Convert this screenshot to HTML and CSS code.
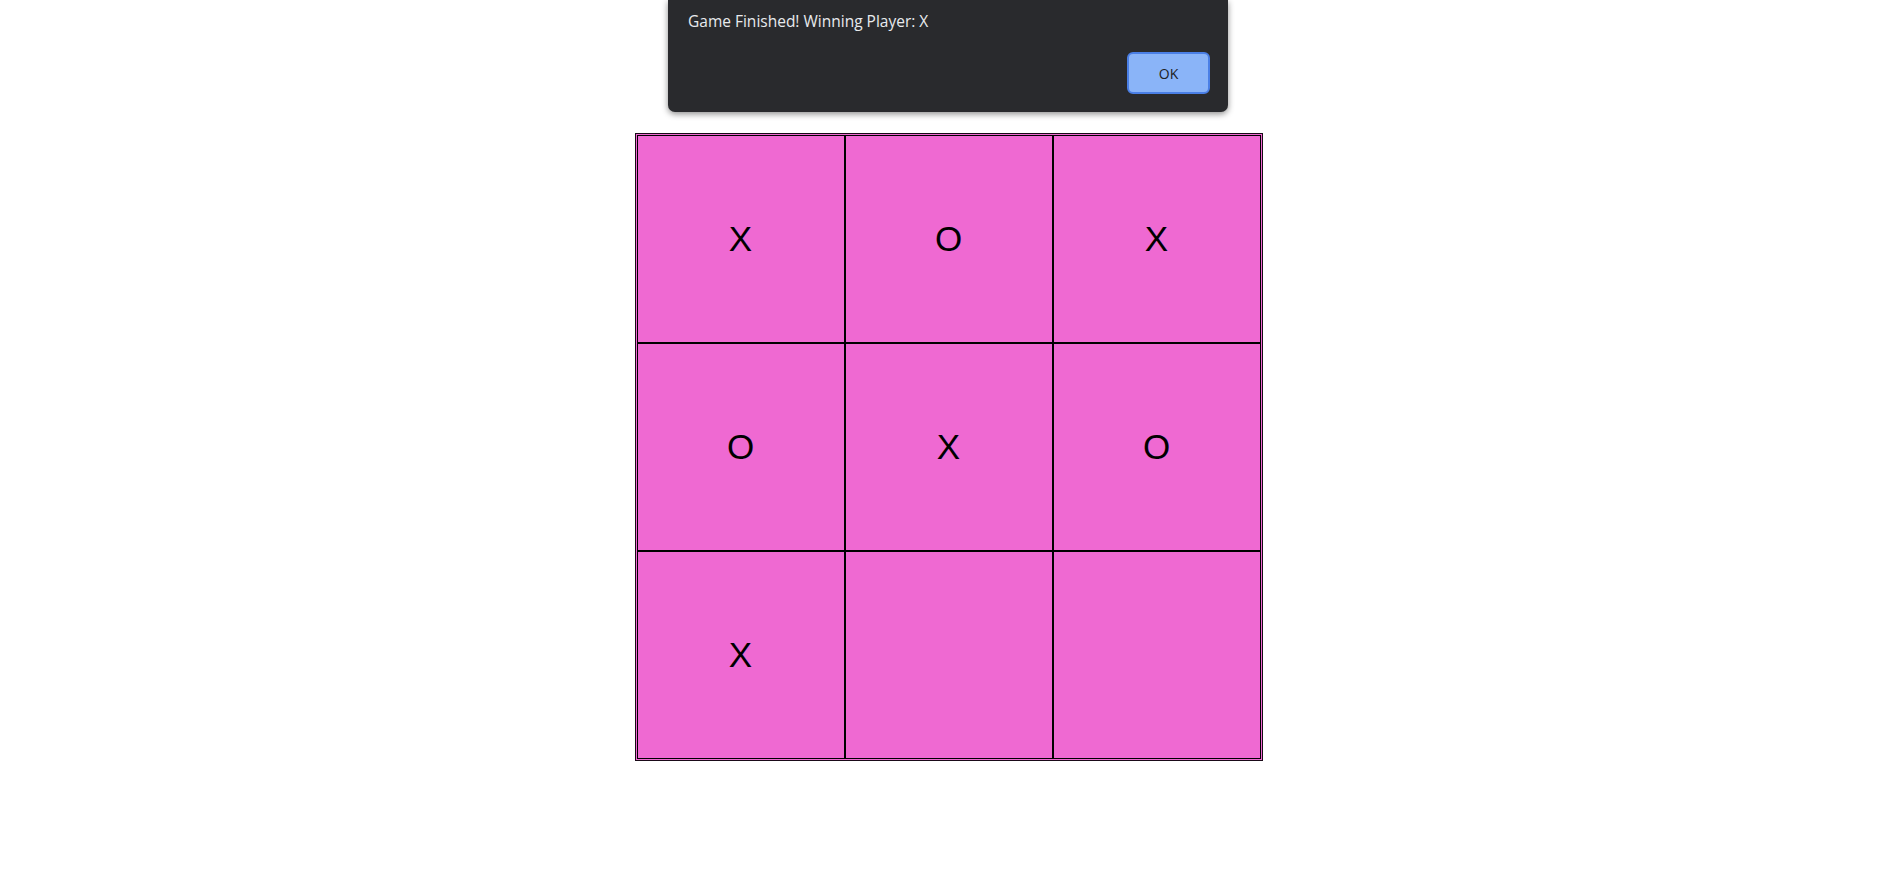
FILE: index.html
```html
<!DOCTYPE html>
<html>
<head>
<meta charset="utf-8">
<title>Tic Tac Toe</title>
<link rel="stylesheet" href="styles.css">
</head>
<body>
<div class="page">
  <div class="board">
    <div class="cell">X</div>
    <div class="cell">O</div>
    <div class="cell">X</div>
    <div class="cell">O</div>
    <div class="cell">X</div>
    <div class="cell">O</div>
    <div class="cell">X</div>
    <div class="cell"></div>
    <div class="cell"></div>
  </div>
</div>
<div class="dialog">
  <div class="dialog-msg">Game Finished! Winning Player: X</div>
  <div class="dialog-actions">
    <button class="ok-btn">OK</button>
  </div>
</div>
</body>
</html>
```

FILE: styles.css
```css
html, body {
  margin: 0;
  padding: 0;
  background: #ffffff;
}
.page {
  display: flex;
  justify-content: center;
  padding-top: 133px;
}
.board {
  display: grid;
  grid-template-columns: repeat(3, 208px);
  grid-template-rows: repeat(3, 208px);
  border: 1px solid #1a0a18;
  padding: 1px;
  background: #ef69d2;
}
.cell {
  box-sizing: border-box;
  border: 1px solid #000000;
  background: #ef69d2;
  display: flex;
  align-items: center;
  justify-content: center;
  font-family: "Liberation Sans", Arial, sans-serif;
  font-size: 35px;
  color: #000000;
}
.dialog {
  position: absolute;
  top: 0;
  left: 668px;
  width: 560px;
  height: 112px;
  box-sizing: border-box;
  background: #292a2d;
  border-radius: 0 0 7px 7px;
  box-shadow: 0 2px 6px rgba(0,0,0,0.45);
  padding: 11px 18px 0 20px;
  display: flex;
  flex-direction: column;
}
.dialog-msg {
  font-family: "Open Sans", "Noto Sans", sans-serif;
  font-size: 15.5px;
  color: #e8eaed;
  line-height: 21px;
}
.dialog-actions {
  display: flex;
  justify-content: flex-end;
  margin-top: 20px;
}
.ok-btn {
  width: 83px;
  height: 42px;
  box-sizing: border-box;
  background: #8ab4f8;
  border: 2px solid #4a7fe6;
  border-radius: 6px;
  font-family: "Open Sans", "Noto Sans", sans-serif;
  font-size: 14px;
  color: #202124;
  padding: 0;
}
```
